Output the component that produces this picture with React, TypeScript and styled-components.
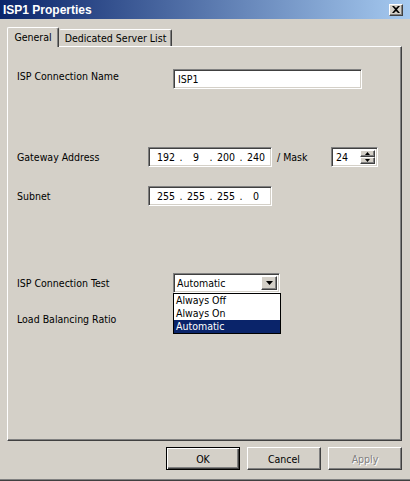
import React from 'react';
import styled, { css, createGlobalStyle } from 'styled-components';

const GlobalStyle = createGlobalStyle`
  html, body {
    margin: 0;
    padding: 0;
    background: #d4d0c8;
  }
  body {
    font-family: 'DejaVu Sans Condensed', 'Liberation Sans', Arial, sans-serif;
    font-size: 10.5px;
    color: #000;
  }
`;

const sunken = css`
  background: #fff;
  border: 1px solid;
  border-color: #808080 #fff #fff #808080;
  box-shadow: inset 1px 1px 0 #404040, inset -1px -1px 0 #d4d0c8;
`;

const raised = css`
  background: #d4d0c8;
  border: 1px solid;
  border-color: #fff #404040 #404040 #fff;
  box-shadow: inset -1px -1px 0 #808080;
`;

export default function App() {
  return (
    <Window>
      <GlobalStyle />
      <TitleBar>
        <Title>ISP1 Properties</Title>
        <CloseButton>
          <svg width="8" height="7" viewBox="0 0 8 7">
            <path d="M0 0h2l2 2 2-2h2L5 3.5 8 7H6L4 5 2 7H0l3-3.5z" fill="#000" />
          </svg>
        </CloseButton>
      </TitleBar>
      <Body>
        <TabStrip>
          <Tab $active>General</Tab>
          <Tab>Dedicated Server List</Tab>
        </TabStrip>
        <Panel>
          <Row $top={22}>
            <Label $width={156} $raise>
              ISP Connection Name
            </Label>
            <TextBox $width={189}>ISP1</TextBox>
          </Row>

          <Row $top={58}>
            <Label $width={131}>Gateway Address</Label>
            <IpField octets={['192', '9', '200', '240']} />
            <MaskLabel>/ Mask</MaskLabel>
            <SpinBox>
              24
              <SpinButtons>
                <SpinButton>
                  <svg width="5" height="3" viewBox="0 0 5 3">
                    <path d="M2.5 0L5 3H0z" fill="#000" />
                  </svg>
                </SpinButton>
                <SpinButton>
                  <svg width="5" height="3" viewBox="0 0 5 3">
                    <path d="M0 0h5L2.5 3z" fill="#000" />
                  </svg>
                </SpinButton>
              </SpinButtons>
            </SpinBox>
          </Row>

          <Row $top={19}>
            <Label $width={131}>Subnet</Label>
            <IpField octets={['255', '255', '255', '0']} />
          </Row>

          <Row $top={67}>
            <Label $width={156}>ISP Connection Test</Label>
            <Combo>
              Automatic
              <ComboArrow>
                <svg width="7" height="4" viewBox="0 0 7 4">
                  <path d="M0 0h7L3.5 4z" fill="#000" />
                </svg>
              </ComboArrow>
              <DropList>
                <DropItem>Always Off</DropItem>
                <DropItem>Always On</DropItem>
                <DropItem $selected>Automatic</DropItem>
              </DropList>
            </Combo>
          </Row>

          <Row $top={16}>
            <Label $width={156}>Load Balancing Ratio</Label>
          </Row>
        </Panel>
        <ButtonRow>
          <DialogButton $default>OK</DialogButton>
          <DialogButton>Cancel</DialogButton>
          <DialogButton $disabled>Apply</DialogButton>
        </ButtonRow>
      </Body>
    </Window>
  );
}

function IpField({ octets }: { octets: string[] }) {
  return (
    <IpBox>
      {octets.map((o, i) => (
        <React.Fragment key={i}>
          <Octet>{o}</Octet>
          {i < octets.length - 1 && <Dot>.</Dot>}
        </React.Fragment>
      ))}
    </IpBox>
  );
}

const Window = styled.div`
  width: 410px;
  height: 481px;
  display: flex;
  flex-direction: column;
  background: #d4d0c8;
  border-bottom: 1px solid #404040;
  box-sizing: border-box;
`;

const TitleBar = styled.div`
  height: 19px;
  flex: none;
  display: flex;
  align-items: center;
  justify-content: space-between;
  padding: 0 7px 0 3px;
  background: linear-gradient(to right, #0a246a, #a6caf0);
`;

const Title = styled.span`
  color: #fff;
  font-family: 'Liberation Sans', Arial, sans-serif;
  font-weight: bold;
  font-size: 12px;
`;

const CloseButton = styled.div`
  ${raised};
  width: 14px;
  height: 12px;
  box-sizing: border-box;
  display: flex;
  align-items: center;
  justify-content: center;
`;

const Body = styled.div`
  flex: 1;
  display: flex;
  flex-direction: column;
  padding: 8px 8px 0 7px;
  border-bottom: 1px solid #808080;
`;

const TabStrip = styled.div`
  display: flex;
  align-items: flex-end;
  height: 19px;
`;

const Tab = styled.div<{ $active?: boolean }>`
  position: relative;
  z-index: 1;
  box-sizing: border-box;
  display: flex;
  align-items: center;
  background: #d4d0c8;
  border-top: 1px solid #fff;
  border-left: 1px solid #fff;
  border-right: 1px solid #404040;
  box-shadow: inset -1px 0 0 #808080;
  border-radius: 2px 2px 0 0;
  ${(p) =>
    p.$active
      ? css`
          width: 52px;
          justify-content: center;
          height: 20px;
          margin-bottom: -1px;
          padding-bottom: 2px;
        `
      : css`
          width: 113px;
          justify-content: center;
          height: 17px;
          border-left-color: transparent;
        `}
`;

const Panel = styled.div`
  flex: 1;
  display: flex;
  flex-direction: column;
  padding-left: 9px;
  border: 1px solid;
  border-color: #fff #404040 #404040 #fff;
  box-shadow: inset -1px -1px 0 #808080;
`;

const Row = styled.div<{ $top: number }>`
  display: flex;
  align-items: center;
  height: 20px;
  margin-top: ${(p) => p.$top}px;
`;

const Label = styled.div<{ $width: number; $raise?: boolean }>`
  width: ${(p) => p.$width}px;
  flex: none;
  padding-bottom: ${(p) => (p.$raise ? 6 : 0)}px;
`;

const TextBox = styled.div<{ $width: number }>`
  ${sunken};
  width: ${(p) => p.$width}px;
  height: 20px;
  box-sizing: border-box;
  padding: 0 4px;
  display: flex;
  align-items: center;
`;

const IpBox = styled.div`
  ${sunken};
  width: 124px;
  height: 20px;
  box-sizing: border-box;
  padding-left: 5px;
  display: flex;
  align-items: center;
`;

const Octet = styled.span`
  width: 24px;
  text-align: center;
`;

const Dot = styled.span`
  width: 6px;
  text-align: center;
`;

const MaskLabel = styled.span`
  width: 59px;
  padding-left: 5px;
  box-sizing: border-box;
  flex: none;
`;

const SpinBox = styled.div`
  ${sunken};
  position: relative;
  width: 47px;
  height: 20px;
  box-sizing: border-box;
  padding-left: 4px;
  display: flex;
  align-items: center;
`;

const SpinButtons = styled.div`
  position: absolute;
  right: 2px;
  top: 2px;
  bottom: 2px;
  width: 15px;
  display: flex;
  flex-direction: column;
`;

const SpinButton = styled.div`
  ${raised};
  flex: 1;
  box-sizing: border-box;
  display: flex;
  align-items: center;
  justify-content: center;
`;

const Combo = styled.div`
  ${sunken};
  position: relative;
  width: 107px;
  height: 20px;
  box-sizing: border-box;
  padding-left: 3px;
  display: flex;
  align-items: center;
`;

const ComboArrow = styled.div`
  ${raised};
  position: absolute;
  right: 2px;
  top: 2px;
  bottom: 2px;
  width: 16px;
  box-sizing: border-box;
  display: flex;
  align-items: center;
  justify-content: center;
`;

const DropList = styled.div`
  position: absolute;
  z-index: 2;
  left: -1px;
  top: calc(100% + 1px);
  width: 108px;
  border: 1px solid #000;
  background: #fff;
  box-sizing: border-box;
`;

const DropItem = styled.div<{ $selected?: boolean }>`
  height: 13px;
  line-height: 13px;
  padding-left: 2px;
  background: ${(p) => (p.$selected ? '#0a246a' : '#fff')};
  color: ${(p) => (p.$selected ? '#fff' : '#000')};
`;

const ButtonRow = styled.div`
  display: flex;
  justify-content: flex-end;
  gap: 7px;
  padding: 6px 0 9px;
`;

const DialogButton = styled.div<{ $default?: boolean; $disabled?: boolean }>`
  ${raised};
  width: 74px;
  height: 23px;
  box-sizing: border-box;
  display: flex;
  align-items: center;
  justify-content: center;
  color: ${(p) => (p.$disabled ? '#808080' : '#000')};
  text-shadow: ${(p) => (p.$disabled ? '1px 1px 0 #fff' : 'none')};
  ${(p) =>
    p.$default &&
    css`
      border-color: #000;
      box-shadow: inset 1px 1px 0 #fff, inset -1px -1px 0 #404040,
        inset -2px -2px 0 #808080;
    `}
`;
